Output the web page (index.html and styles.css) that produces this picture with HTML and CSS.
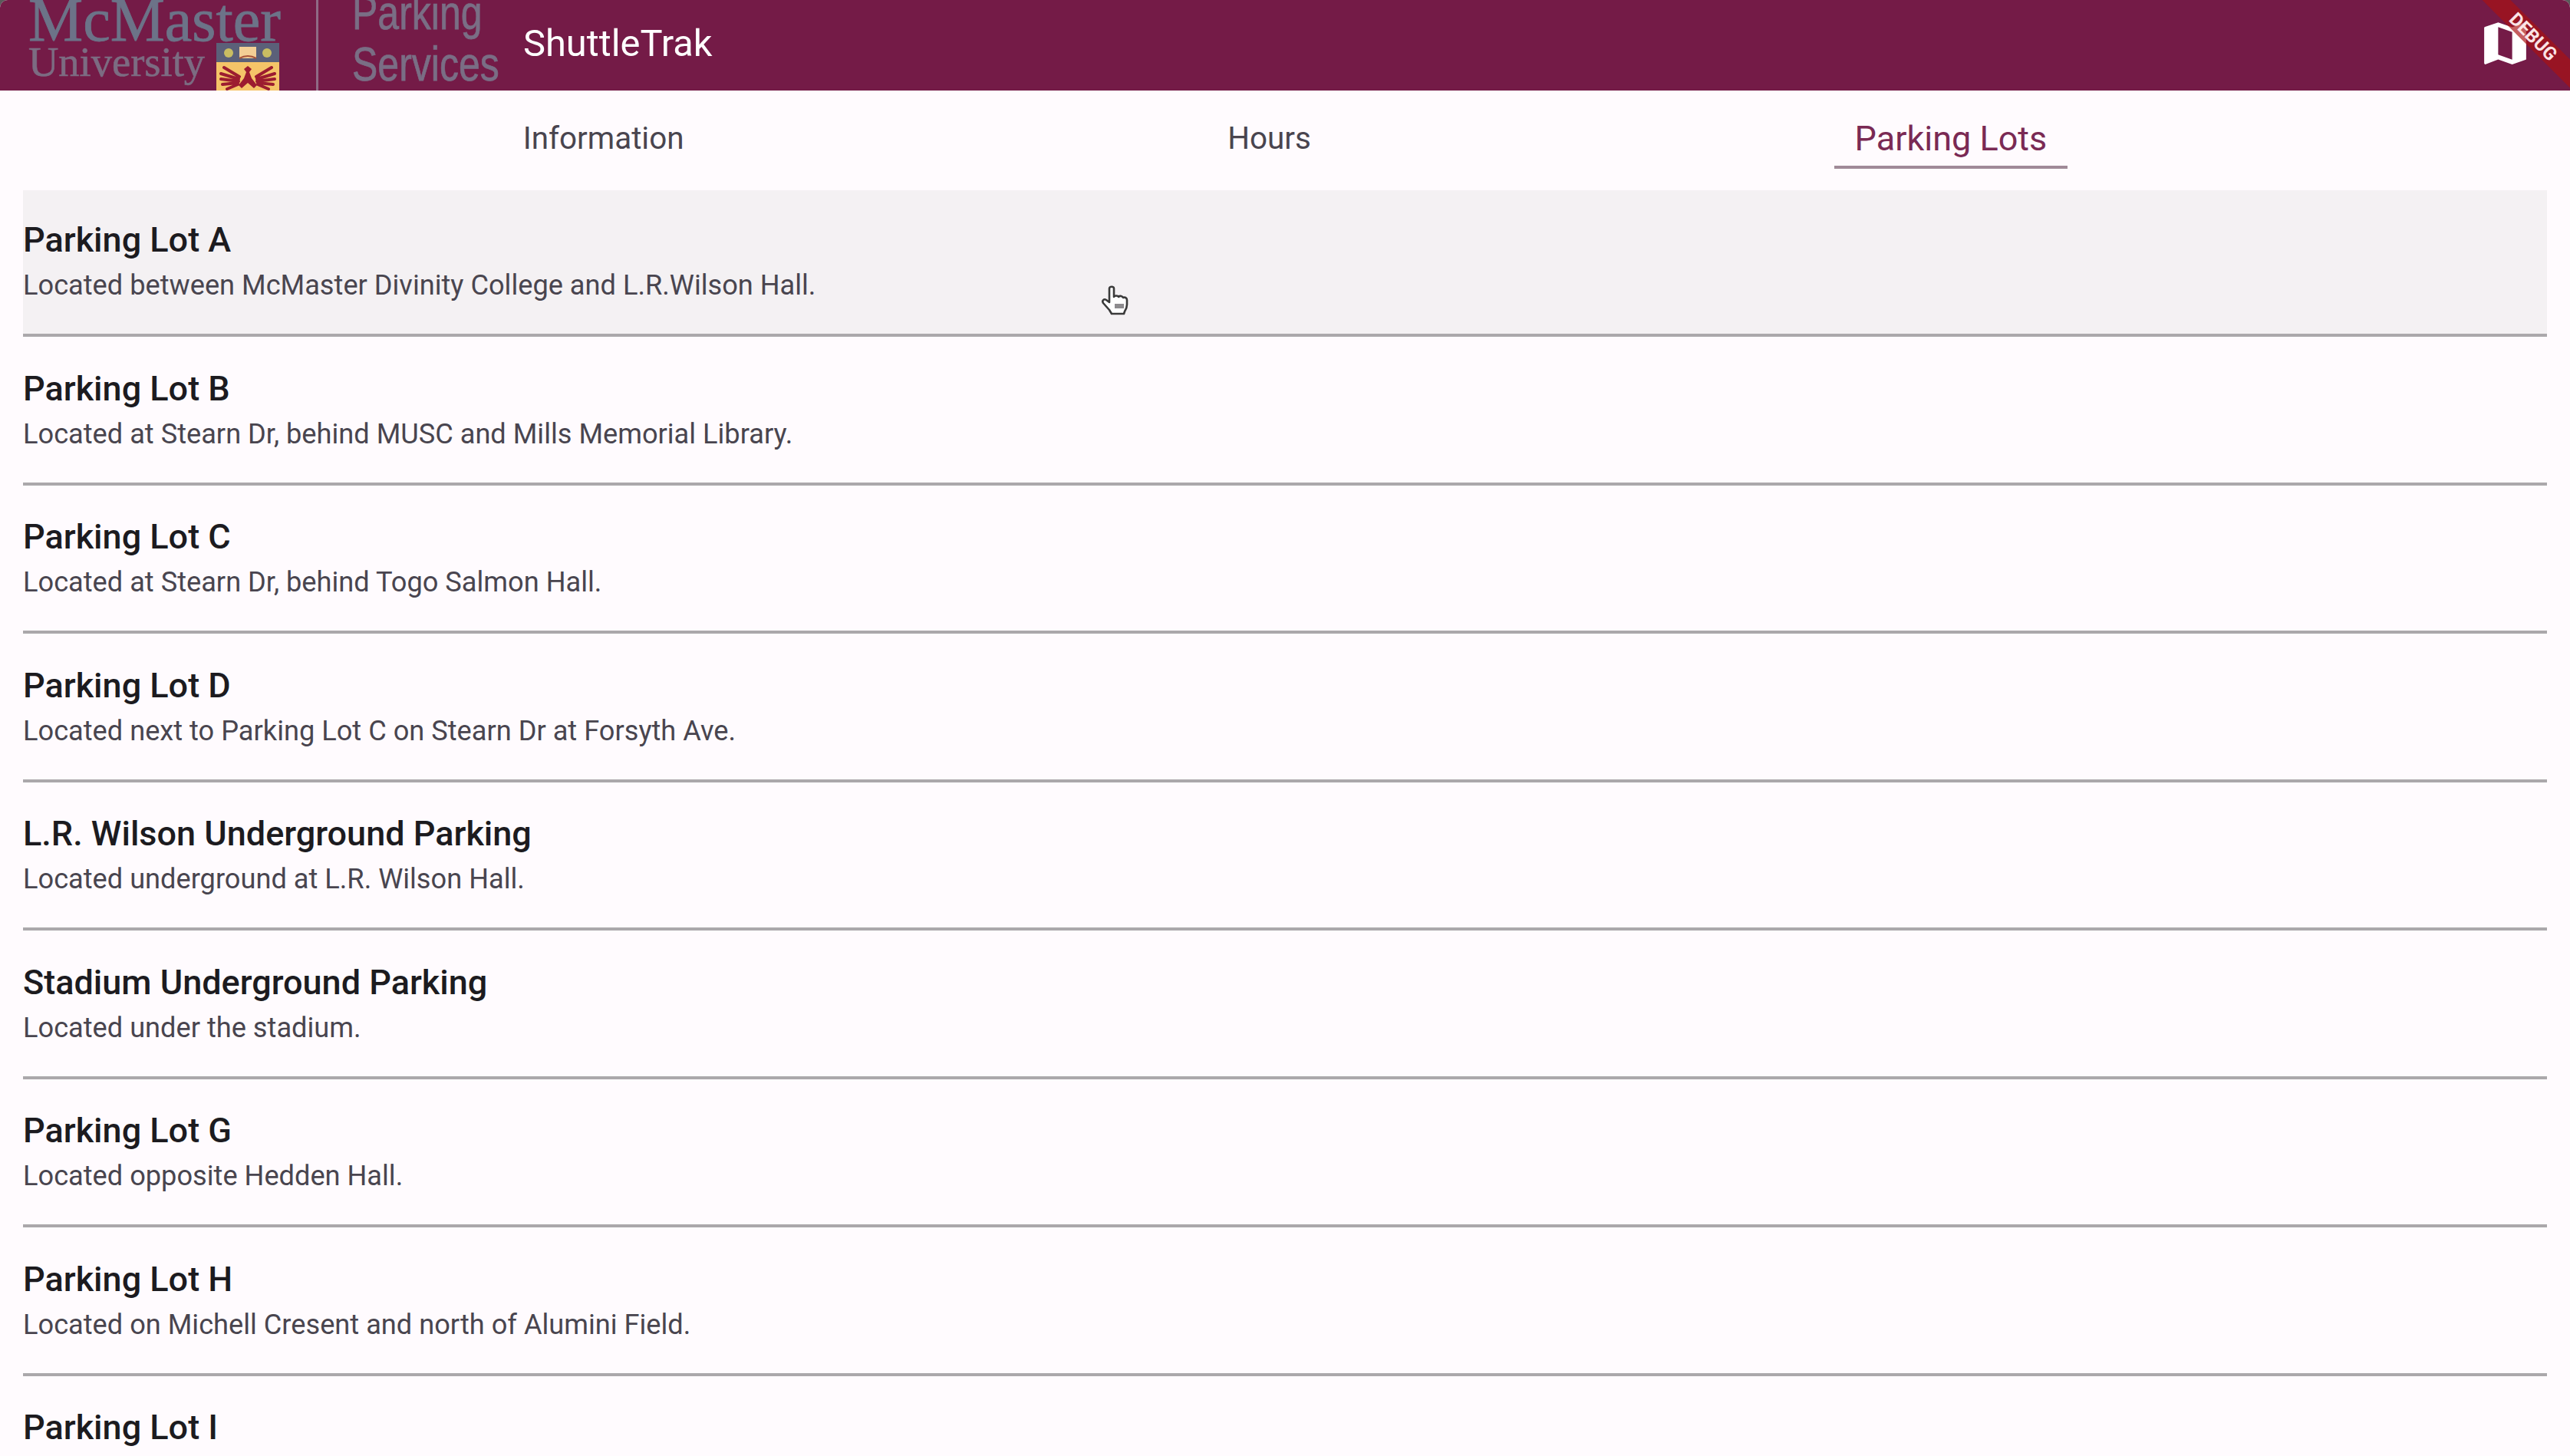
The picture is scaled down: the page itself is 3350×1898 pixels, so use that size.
FILE: index.html
```html
<!DOCTYPE html>
<html lang="en">
<head>
  <meta charset="UTF-8" />
  <title>ShuttleTrak - Parking Lots</title>
  <link rel="stylesheet" href="styles.css">
</head>
<body>
  <div class="screen">
    <header class="appbar">
      <div class="logo-uni">
        <div class="logo-mc">McMaster</div>
        <div class="logo-row">
          <span class="logo-univ">University</span>
          <svg class="shield" viewBox="0 0 82 62" aria-hidden="true">
            <rect width="82" height="62" fill="#f5c468"/>
            <rect width="82" height="25" fill="#5b6079"/>
            <circle cx="16" cy="13" r="6" fill="#c9bd62"/>
            <circle cx="66" cy="13" r="6" fill="#c9bd62"/>
            <rect x="30" y="5" width="22" height="15" fill="#f3cf95"/>
            <path d="M30 20q11-6 22 0" fill="none" stroke="#a8553a" stroke-width="2"/>
            <path d="M41 30l-5 4 3 4-3 8-7 9 4 4 8-7 8 7 4-4-7-9-3-8 3-4z" fill="#9c1c30"/>
            <g fill="none" stroke="#9c1c30" stroke-width="4" stroke-linecap="round">
              <path d="M30 44L10 32M29 47L6 40M29 50L6 47M28 52L8 54M28 54L14 60"/>
              <path d="M52 44L72 32M53 47L76 40M53 50L76 47M54 52L74 54M54 54L68 60"/>
            </g>
          </svg>
        </div>
      </div>
      <div class="logo-divider"></div>
      <div class="logo-dept">
        <div class="logo-parking">Parking</div>
        <div class="logo-services">Services</div>
      </div>
      <div class="app-title">ShuttleTrak</div>
      <button class="map-btn" aria-label="Map">
        <svg class="map-icon" viewBox="0 0 24 24"><path d="M20.5 3l-.16.03L15 5.1 9 3 3.36 4.9c-.21.07-.36.25-.36.48V20.5c0 .28.22.5.5.5l.16-.03L9 18.9l6 2.1 5.64-1.9c.21-.07.36-.25.36-.48V3.5c0-.28-.22-.5-.5-.5zM15 19l-6-2.11V5l6 2.11V19z"/></svg>
      </button>
      <div class="debug-banner">DEBUG</div>
    </header>

    <nav class="tabs">
      <div class="tab">Information</div>
      <div class="tab">Hours</div>
      <div class="tab active">Parking Lots</div>
    </nav>

    <ul class="lots">
      <li class="lot hovered">
        <h2>Parking Lot A</h2>
        <p>Located between McMaster Divinity College and L.R.Wilson Hall.</p>
      </li>
      <li class="lot">
        <h2>Parking Lot B</h2>
        <p>Located at Stearn Dr, behind MUSC and Mills Memorial Library.</p>
      </li>
      <li class="lot">
        <h2>Parking Lot C</h2>
        <p>Located at Stearn Dr, behind Togo Salmon Hall.</p>
      </li>
      <li class="lot">
        <h2>Parking Lot D</h2>
        <p>Located next to Parking Lot C on Stearn Dr at Forsyth Ave.</p>
      </li>
      <li class="lot">
        <h2>L.R. Wilson Underground Parking</h2>
        <p>Located underground at L.R. Wilson Hall.</p>
      </li>
      <li class="lot">
        <h2>Stadium Underground Parking</h2>
        <p>Located under the stadium.</p>
      </li>
      <li class="lot">
        <h2>Parking Lot G</h2>
        <p>Located opposite Hedden Hall.</p>
      </li>
      <li class="lot">
        <h2>Parking Lot H</h2>
        <p>Located on Michell Cresent and north of Alumini Field.</p>
      </li>
      <li class="lot">
        <h2>Parking Lot I</h2>
      </li>
    </ul>

    <svg class="cursor" viewBox="0 0 37 40" aria-hidden="true">
      <path d="M11 4c0-3 6-3 6 0v11c1-2 5-2 6 0 2-2 5-1 6 1 2-1 5 0 5 3v6c0 4-1 6-3 9l-1 3H14l-3-5-8-9c-2-3 1-6 4-4l4 3z" fill="#fff" stroke="#3a3a3a" stroke-width="2.6" stroke-linejoin="round"/>
      <path d="M18 24h12v6H18z" fill="#8d8b8e"/>
    </svg>
  </div>
</body>
</html>
```

FILE: styles.css
```css
html, body {
  margin: 0;
  padding: 0;
  height: 100%;
  overflow: hidden;
  background: #5a5a5a;
}
.screen {
  position: relative;
  height: 1898px;
  overflow: hidden;
  background-color: #FFFBFE;
  border-radius: 10px 10px 0 0;
  font-family: 'Roboto', sans-serif;
}

/* app bar */
.appbar {
  position: relative;
  display: flex;
  align-items: flex-start;
  height: 118px;
  padding-left: 37px;
  background-color: #741B47;
  overflow: hidden;
}
.logo-uni {
  width: 332px;
  color: #6C7388;
  font-family: 'Liberation Serif', serif;
  filter: blur(0.7px);
}
.logo-mc {
  height: 60px;
  font-size: 80px;
  line-height: 60px;
  margin-top: -4px;
  white-space: nowrap;
  -webkit-text-stroke: 0.8px #6C7388;
}
.logo-row {
  display: flex;
  align-items: flex-start;
  height: 62px;
}
.logo-univ {
  width: 245px;
  font-size: 54.5px;
  line-height: 50px;
  color: #7C6C82;
  -webkit-text-stroke: 0.6px #7C6C82;
}
.shield {
  width: 82px;
  height: 62px;
}
.logo-divider {
  width: 3px;
  height: 118px;
  margin-left: 43px;
  background-color: #8F6A85;
}
.logo-dept {
  width: 223px;
  padding-left: 44px;
  color: #7A6E85;
  font-family: 'Liberation Sans', sans-serif;
  font-size: 50px;
  filter: blur(0.7px);
}
.logo-parking, .logo-services {
  height: 67px;
  line-height: 67px;
  transform: scaleY(1.25);
  -webkit-text-stroke: 0.6px #7A6E85;
}
.logo-parking {
  margin-top: -16px;
}
.app-title {
  color: #fff;
  font-size: 48.8px;
  line-height: 114px;
}
.map-btn {
  display: flex;
  margin-left: auto;
  margin-right: 48px;
  padding: 0;
  margin-top: 20px;
  border: none;
  background: none;
}
.map-icon {
  width: 73px;
  height: 73px;
  fill: #fff;
}
.debug-banner {
  position: absolute;
  top: 35px;
  right: -72px;
  width: 240px;
  height: 26px;
  line-height: 26px;
  transform: rotate(45deg);
  background-color: rgba(170, 18, 18, 0.68);
  color: #FBE4E6;
  font-size: 24px;
  font-weight: 700;
  text-align: center;
}

/* tabs */
.tabs {
  display: flex;
  justify-content: space-evenly;
  height: 130px;
}
.tab {
  height: 98px;
  padding: 0 27px;
  color: #49454F;
  font-size: 40.4px;
  line-height: 126px;
}
.tab.active {
  color: #7A2A54;
  font-size: 45px;
  border-bottom: 4px solid #A08A98;
}

/* list */
.lots {
  margin: 0;
  padding: 0 30px;
  list-style: none;
}
.lot {
  box-sizing: border-box;
  height: 193.5px;
  padding-top: 37.5px;
  border-bottom: 4px solid #ABA8AB;
}
.lot.hovered {
  height: 191px;
  padding-top: 35px;
  background-color: #F4F1F3;
}
.lot h2 {
  margin: 0;
  color: #1C1B1F;
  font-size: 45px;
  font-weight: 500;
  line-height: 60px;
}
.lot p {
  margin: 0;
  color: #49454F;
  font-size: 36.2px;
  line-height: 58px;
}

.cursor {
  position: absolute;
  left: 1435px;
  top: 372px;
  width: 37px;
  height: 40px;
  filter: blur(0.6px);
}
```
